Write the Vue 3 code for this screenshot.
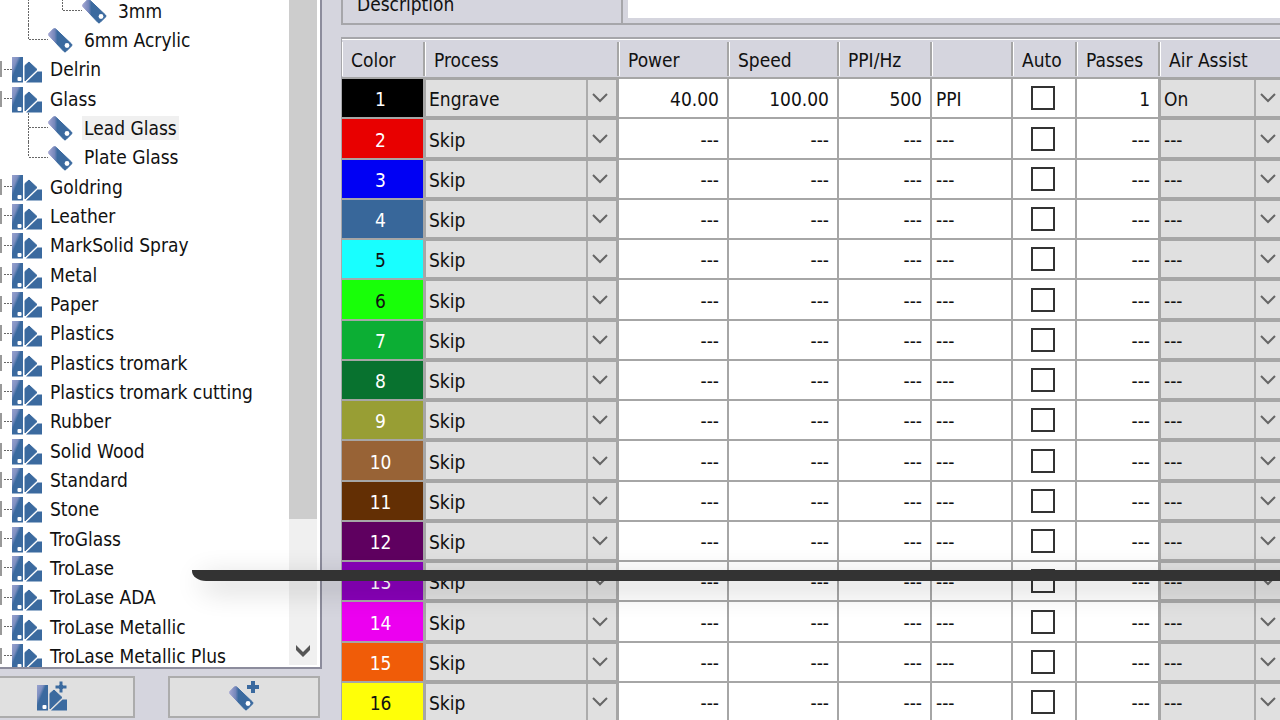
<script setup>
import { ref } from 'vue'

const tree = [
  { name: '3mm', level: 2, last: true },
  { name: '6mm Acrylic', level: 1, last: true },
  { name: 'Delrin', level: 0 },
  { name: 'Glass', level: 0 },
  { name: 'Lead Glass', level: 1, selected: true },
  { name: 'Plate Glass', level: 1, last: true },
  ...[
    'Goldring', 'Leather', 'MarkSolid Spray', 'Metal', 'Paper', 'Plastics',
    'Plastics tromark', 'Plastics tromark cutting', 'Rubber', 'Solid Wood',
    'Standard', 'Stone', 'TroGlass', 'TroLase', 'TroLase ADA',
    'TroLase Metallic', 'TroLase Metallic Plus',
  ].map((name) => ({ name, level: 0 })),
]

const colors = [
  '#000000', '#e80000', '#0000f4', '#38679a', '#18ffff', '#18ff08', '#0cae34', '#08722f',
  '#989e34', '#986336', '#632f04', '#5f0060', '#8800b8', '#ec00f0', '#f05c08', '#ffff08',
]
const darkText = [5, 6, 16]

const rows = ref(colors.map((color, i) => {
  const on = i === 0
  return {
    id: i + 1,
    color,
    ink: darkText.includes(i + 1) ? '#111111' : '#ffffff',
    process: on ? 'Engrave' : 'Skip',
    power: on ? '40.00' : '---',
    speed: on ? '100.00' : '---',
    ppi: on ? '500' : '---',
    unit: on ? 'PPI' : '---',
    auto: false,
    passes: on ? '1' : '---',
    air: on ? 'On' : '---',
  }
}))

const headers = ['Color', 'Process', 'Power', 'Speed', 'PPI/Hz', '', 'Auto', 'Passes', 'Air Assist']
const description = ref('')
</script>

<template>
  <div class="app">
    <svg class="defs" aria-hidden="true">
      <defs>
        <linearGradient id="fade" x1="0" y1="0" x2="1" y2="1">
          <stop offset="0" stop-color="#9aa2cf" />
          <stop offset="0.28" stop-color="#7d8fc0" />
          <stop offset="0.42" stop-color="#3b6a9f" />
        </linearGradient>
        <linearGradient id="fadeTag" x1="0" y1="0" x2="1" y2="0">
          <stop offset="0" stop-color="#a3a6d2" />
          <stop offset="0.26" stop-color="#7586ba" />
          <stop offset="0.38" stop-color="#3b6a9f" />
        </linearGradient>
        <symbol id="swatch" viewBox="0 0 30 26">
          <path d="M0 0H11V25.500H0Z" fill="url(#fade)" />
          <path d="M13 8.500L17 5L25 12.500L13 24Z" fill="#3b6a9f" stroke="#3b6a9f" stroke-linejoin="round" />
          <path d="M14 25.500L25.500 14.500H30V25.500Z" fill="#3b6a9f" />
          <rect x="5.500" y="20" width="4" height="4" rx="1" fill="#fff" />
        </symbol>
        <symbol id="tag" viewBox="0 0 25 25">
          <path d="M0.800 5.500L5.500 0.800Q6.500 0 7.500 0.800L23.500 16Q24.500 17 23.500 18L18 23.500Q17 24.500 16 23.500L0.800 7.500Q0 6.500 0.800 5.500Z" fill="url(#fadeTag)" stroke="url(#fadeTag)" />
          <circle cx="19" cy="17.500" r="2.400" fill="#fff" />
        </symbol>
      </defs>
    </svg>

    <aside class="sidebar">
      <div class="tree-box">
        <ul class="tree">
          <li v-for="item in tree" :key="item.name" :class="['node', 'level' + item.level, { last: item.last }]">
            <span v-if="item.level === 2" class="rail"></span>
            <span v-if="item.level === 0" class="expander"></span>
            <span v-else class="branch"></span>
            <span class="dots"></span>
            <svg v-if="item.level === 0" class="swatch-icon"><use href="#swatch" /></svg>
            <svg v-else class="tag-icon"><use href="#tag" /></svg>
            <span :class="['name', { selected: item.selected }]">{{ item.name }}</span>
          </li>
        </ul>
        <div class="scrollbar">
          <div class="thumb"></div>
          <svg class="scroll-arrow" viewBox="0 0 14 12"><path d="M0 0L7 7L14 0V5L7 12L0 5Z" fill="#555" /></svg>
        </div>
      </div>
      <div class="actions">
        <button type="button" class="action first" aria-label="Add material group">
          <svg width="32" height="30" viewBox="0 0 32 30">
            <use href="#swatch" y="4" width="30" height="26" />
            <path d="M22 0H26V4H30V8H26V12H22V8H18V4H22Z" fill="#3b6a9f" stroke="#e0e0e0" stroke-width="1" />
          </svg>
        </button>
        <button type="button" class="action" aria-label="Add material">
          <svg width="32" height="30" viewBox="0 0 32 30">
            <use href="#tag" x="1" y="5" width="25" height="25" />
            <path d="M23 0H27V4H31V8H27V12H23V8H19V4H23Z" fill="#3b6a9f" />
          </svg>
        </button>
      </div>
    </aside>

    <main class="main">
      <div class="description">
        <label for="description">Description</label>
        <input id="description" v-model="description" type="text" />
      </div>

      <div class="panel">
        <table class="grid">
          <colgroup>
            <col class="c-color" /><col class="c-process" /><col class="c-num" /><col class="c-num" />
            <col class="c-ppi" /><col class="c-unit" /><col class="c-auto" /><col class="c-passes" /><col />
          </colgroup>
          <thead>
            <tr>
              <th v-for="(h, i) in headers" :key="i" scope="col"><div class="head">{{ h }}</div></th>
            </tr>
          </thead>
          <tbody>
            <tr v-for="r in rows" :key="r.id">
              <td class="color" :style="{ backgroundColor: r.color, color: r.ink }">{{ r.id }}</td>
              <td>
                <div class="combo">
                  <select v-model="r.process" :aria-label="'Process ' + r.id">
                    <option>Engrave</option>
                    <option>Skip</option>
                  </select>
                  <span class="arrow"><svg width="16" height="10" viewBox="0 0 16 10"><path d="M1 1L8 8L15 1" /></svg></span>
                </div>
              </td>
              <td class="num">{{ r.power }}</td>
              <td class="num">{{ r.speed }}</td>
              <td class="num">{{ r.ppi }}</td>
              <td class="unit">{{ r.unit }}</td>
              <td class="auto"><input v-model="r.auto" type="checkbox" :aria-label="'Auto ' + r.id" /></td>
              <td class="num">{{ r.passes }}</td>
              <td>
                <div class="combo">
                  <select v-model="r.air" :aria-label="'Air Assist ' + r.id">
                    <option>On</option>
                    <option>---</option>
                  </select>
                  <span class="arrow"><svg width="16" height="10" viewBox="0 0 16 10"><path d="M1 1L8 8L15 1" /></svg></span>
                </div>
              </td>
            </tr>
          </tbody>
        </table>
      </div>
    </main>

    <div class="overlay-edge"></div>
  </div>
</template>

<style>
body {
  overflow: hidden;
}
</style>

<style scoped>
.app {
  position: relative;
  display: flex;
  gap: 19px;
  height: 100vh;
  overflow: hidden;
  background: #d5d5de;
  color: #111;
  font-family: "DejaVu Sans Condensed", "DejaVu Sans", sans-serif;
  font-size: 19px;
  line-height: 24px;
}
.app * {
  box-sizing: border-box;
}
.defs {
  position: absolute;
  width: 0;
  height: 0;
}
.sidebar {
  display: flex;
  flex-direction: column;
  flex: none;
  gap: 7px;
  width: 322px;
  padding-bottom: 2px;
}
.tree-box {
  display: flex;
  flex: 1;
  min-height: 0;
  overflow: hidden;
  background: #fff;
  border-right: 2px solid #8c8c9c;
  border-bottom: 2px solid #8c8c9c;
}
.tree {
  flex: 1;
  min-width: 0;
  margin: -4px 0 0;
  padding: 0;
  list-style: none;
}
.node {
  position: relative;
  display: flex;
  align-items: center;
  height: 29px;
  white-space: nowrap;
}
.node:nth-child(3n) {
  height: 30px;
}
.expander {
  width: 2px;
  height: 16px;
  margin-right: 2px;
  background: #999;
}
.dots {
  width: 8px;
  height: 1px;
  background: repeating-linear-gradient(to right, #666 0 2px, #fff 2px 3px);
}
.level1 .dots,
.level2 .dots {
  width: 19px;
}
.level1 .branch {
  margin-left: 28px;
}
.level2 .branch {
  margin-left: 62px;
}
.branch,
.rail {
  align-self: stretch;
  width: 1px;
  background: repeating-linear-gradient(to bottom, #666 0 2px, #fff 2px 3px);
}
.rail {
  position: absolute;
  top: 0;
  bottom: 0;
  left: 28px;
}
.last .branch {
  height: 50%;
}
.swatch-icon {
  flex: none;
  width: 30px;
  height: 26px;
  margin-top: 2px;
}
.tag-icon {
  flex: none;
  width: 25px;
  height: 25px;
  margin-top: 2px;
}
.name {
  margin-left: 6px;
  padding: 0 2px;
}
.level1 .name,
.level2 .name {
  margin-left: 9px;
}
.selected {
  background: #f0f0f0;
}
.scrollbar {
  display: flex;
  flex-direction: column;
  align-items: center;
  width: 28px;
  margin: 0 3px 2px 0;
  background: #f0f0f0;
}
.thumb {
  width: 100%;
  height: 78%;
  background: #cdcdcd;
}
.scroll-arrow {
  width: 14px;
  height: 12px;
  margin-top: auto;
  margin-bottom: 8px;
}
.actions {
  display: grid;
  grid-template-columns: 1fr 1fr;
  gap: 33px;
  margin: 0 2px 0 -17px;
}
.action {
  display: flex;
  align-items: center;
  justify-content: center;
  height: 42px;
  padding: 0 0 2px;
  background: #e0e0e0;
  border: 2px solid #acacac;
}
.action.first {
  padding-right: 12px;
}
.main {
  flex: 1;
  min-width: 0;
  margin-top: -17px;
}
.description {
  display: flex;
  height: 42px;
  margin-bottom: 12px;
  border: 2px solid #a6a6aa;
  border-right: 0;
}
.description label {
  width: 280px;
  padding: 7px 14px;
  border-right: 2px solid #a6a6aa;
}
.description input {
  flex: 1;
  margin: 5px 0 5px 5px;
  padding: 0 6px;
  font: inherit;
  background: #fff;
  border: 0;
}
.panel {
  margin-right: -7px;
  border-top: 2px solid #a6a6aa;
  border-left: 1px solid #a6a6aa;
}
.grid {
  width: 100%;
  table-layout: fixed;
  border-collapse: separate;
  border-spacing: 0;
  background: #fff;
}
.c-color { width: 83px; }
.c-process { width: 194px; }
.c-num { width: 110px; }
.c-ppi { width: 93px; }
.c-unit { width: 81px; }
.c-auto { width: 64px; }
.c-passes { width: 83px; }
th {
  height: 40px;
  padding: 2px 0 1px;
  font-weight: normal;
  text-align: left;
  background: #d5d5de;
  border-bottom: 2px solid #a6a6a6;
  box-shadow: inset 0 1px #fff;
}
.head {
  height: 34px;
  padding: 6px 0 0 8px;
  border-left: 1px solid #fff;
  border-right: 2px solid #a6a6a6;
  white-space: nowrap;
}
td {
  height: 40px;
  padding: 2px 0 0;
  border-right: 2px solid #a6a6a6;
  border-bottom: 2px solid #a6a6a6;
}
tbody tr:nth-child(4n + 2) td {
  height: 41px;
}
tbody tr:nth-child(4n + 2) .combo {
  height: 39px;
}
td:has(.combo) {
  padding: 0;
}
.color {
  padding-right: 4px;
  text-align: center;
  background-clip: padding-box;
}
.num {
  padding-right: 8px;
  text-align: right;
}
.unit {
  padding-left: 4px;
}
.auto {
  padding: 0 2px 0 0;
  text-align: center;
}
.auto input {
  display: block;
  width: 24px;
  height: 24px;
  margin: 0 auto;
  appearance: none;
  background: #fff;
  border: 2px solid #333;
}
.auto input:checked {
  background: #333;
}
.combo {
  display: grid;
  grid-template-columns: 1fr 30px;
  height: 38px;
  background: #e0e0e0;
  border: 1px solid #a6a6a6;
}
.combo select {
  grid-area: 1 / 1 / 2 / 3;
  min-width: 0;
  padding: 2px 0 0 3px;
  appearance: none;
  font: inherit;
  color: inherit;
  background: transparent;
  border: 0;
  border-radius: 0;
}
.arrow {
  display: flex;
  grid-area: 1 / 2;
  align-items: center;
  justify-content: center;
  padding-right: 4px;
  border-left: 2px solid #acacac;
  pointer-events: none;
}
.arrow path {
  fill: none;
  stroke: #666;
  stroke-width: 2;
}
.overlay-edge {
  position: absolute;
  top: 570px;
  right: -40px;
  left: 192px;
  height: 11px;
  background: #333;
  border-bottom-left-radius: 14px 10px;
  box-shadow: 8px 8px 28px rgba(0, 0, 0, 0.24);
}
</style>
